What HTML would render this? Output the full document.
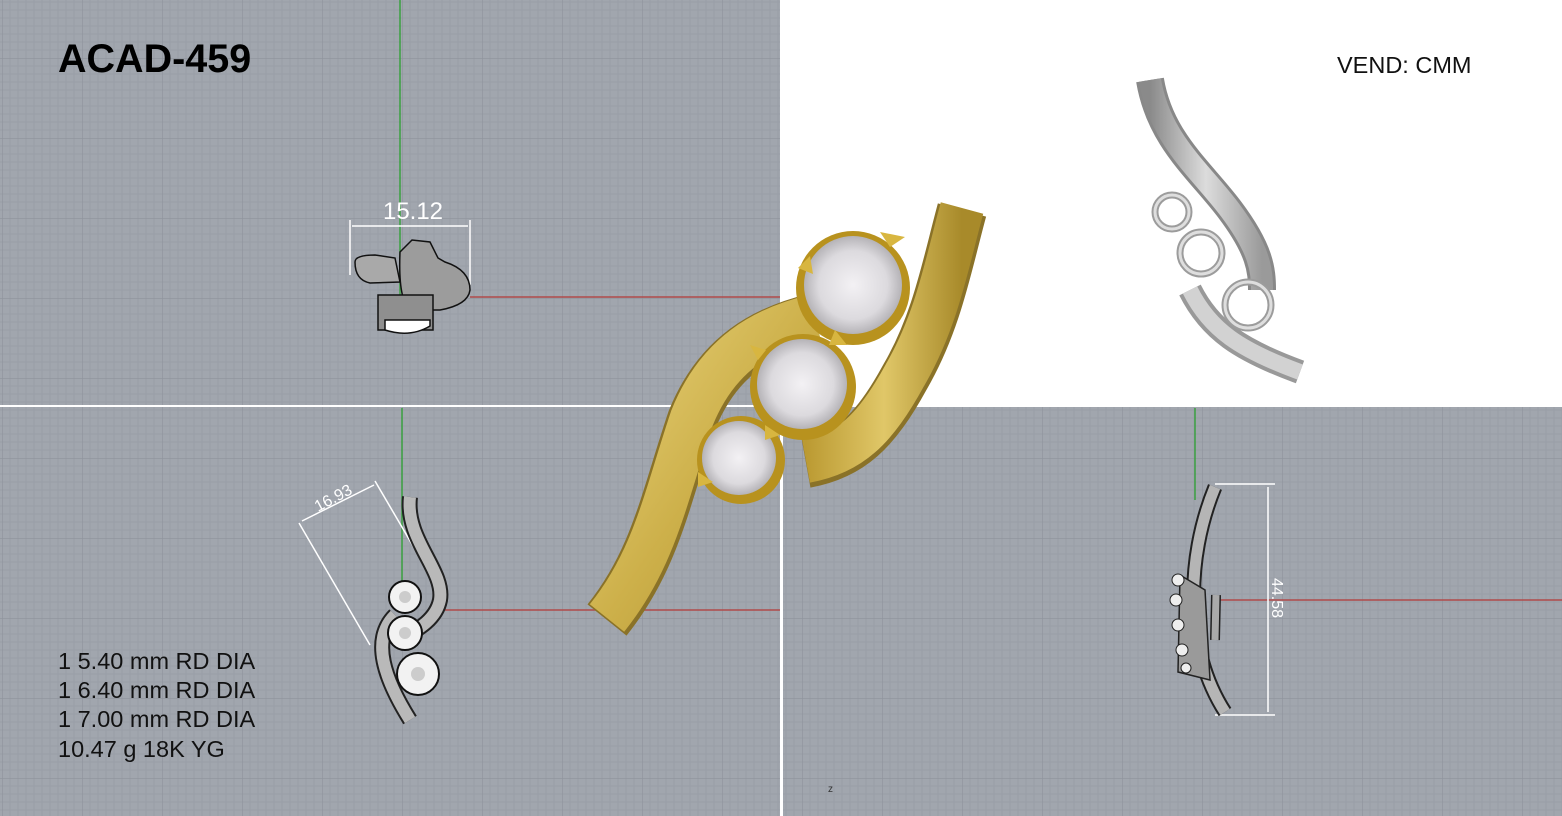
<!DOCTYPE html>
<html><head><meta charset="utf-8"><style>
html,body{margin:0;padding:0;background:#fff;width:1562px;height:816px;overflow:hidden}
svg{display:block}
text{font-family:"Liberation Sans",Arial,sans-serif}
</style></head><body>
<svg width="1562" height="816" viewBox="0 0 1562 816" xmlns="http://www.w3.org/2000/svg">
<defs>
<pattern id="g" width="80" height="80" patternUnits="userSpaceOnUse" x="2" y="-22">
<rect width="80" height="80" fill="#a1a6ae"/>
<path d="M8 0V80M16 0V80M24 0V80M32 0V80M40 0V80M48 0V80M56 0V80M64 0V80M72 0V80M0 8H80M0 16H80M0 24H80M0 32H80M0 40H80M0 48H80M0 56H80M0 64H80M0 72H80" stroke="#999ea7" stroke-width="1"/>
<path d="M0 0V80M0 0H80" stroke="#8e939c" stroke-width="1.2"/>
</pattern>
<linearGradient id="gold" x1="0" y1="0" x2="1" y2="1">
<stop offset="0" stop-color="#e8d27a"/><stop offset=".5" stop-color="#cdb04a"/><stop offset="1" stop-color="#b0922e"/></linearGradient>
<linearGradient id="gold2" x1="0" y1="0" x2="1" y2="0">
<stop offset="0" stop-color="#bb9a32"/><stop offset=".5" stop-color="#e0c768"/><stop offset="1" stop-color="#a88a2a"/></linearGradient>
<radialGradient id="dia" cx=".5" cy=".5" r=".5">
<stop offset="0" stop-color="#f3f1f4"/><stop offset=".7" stop-color="#dcdade"/><stop offset="1" stop-color="#b5b3b7"/></radialGradient>
<linearGradient id="sil" x1="0" y1="0" x2="1" y2="0">
<stop offset="0" stop-color="#8a8a8a"/><stop offset=".5" stop-color="#dcdcdc"/><stop offset="1" stop-color="#9a9a9a"/></linearGradient>
</defs>
<rect x="0" y="0" width="780" height="405" fill="url(#g)"/>
<rect x="0" y="407" width="780" height="409" fill="url(#g)"/>
<rect x="783" y="407" width="779" height="409" fill="url(#g)"/>
<rect x="780" y="0" width="782" height="407" fill="#fff"/>
<line x1="400" y1="0" x2="400" y2="296" stroke="#3aa040" stroke-width="1.5"/>
<line x1="470" y1="297" x2="780" y2="297" stroke="#b04a4a" stroke-width="1.5"/>
<line x1="402" y1="408" x2="402" y2="590" stroke="#3aa040" stroke-width="1.5"/>
<line x1="430" y1="610" x2="780" y2="610" stroke="#b04a4a" stroke-width="1.5"/>
<line x1="1195" y1="408" x2="1195" y2="500" stroke="#3aa040" stroke-width="1.5"/>
<line x1="1215" y1="600" x2="1562" y2="600" stroke="#b04a4a" stroke-width="1.5"/>
<text x="58" y="72" font-size="39.5" font-weight="bold" fill="#000">ACAD-459</text>
<text x="1337" y="73" font-size="23.5" fill="#111">VEND: CMM</text>
<g font-size="23.5" fill="#111">
<text x="58" y="669">1 5.40 mm RD DIA</text>
<text x="58" y="698">1 6.40 mm RD DIA</text>
<text x="58" y="727">1 7.00 mm RD DIA</text>
<text x="58" y="757">10.47 g 18K YG</text>
</g>
<text x="828" y="792" font-size="10" fill="#333">z</text>
<g stroke="#fff" stroke-width="1.5" fill="none">
<line x1="350" y1="220" x2="350" y2="275"/><line x1="470" y1="220" x2="470" y2="285"/>
<line x1="352" y1="226" x2="468" y2="226"/>
</g>
<text x="413" y="219" font-size="24" fill="#fff" text-anchor="middle">15.12</text>
<g stroke="#111" stroke-width="1.5">
<path d="M355 262 Q355 255 375 255 L395 258 L400 282 L370 283 Q355 280 355 262Z" fill="#a9a9a9"/>
<path d="M400 252 L412 240 L430 242 L438 258 L445 262 Q470 270 470 290 Q468 305 440 310 L410 310 Q398 300 400 252Z" fill="#9c9c9c"/>
<rect x="378" y="295" width="55" height="35" fill="#8f8f8f"/>
<path d="M385 330 Q410 338 430 326 L430 320 L385 320Z" fill="#fff"/>
</g>
<!-- gold ring -->
<path d="M607 620 C655 560 665 500 692 420 C718 355 765 330 815 318" fill="none" stroke="#8a7228" stroke-width="50"/>
<path d="M607 618 C655 558 665 498 692 418 C718 353 765 328 815 316" fill="none" stroke="url(#gold)" stroke-width="44"/>
<path d="M962 210 C947 265 937 322 905 377 C875 432 850 455 806 463" fill="none" stroke="#8a7228" stroke-width="50"/>
<path d="M962 208 C947 263 937 320 905 375 C875 430 850 453 806 461" fill="none" stroke="url(#gold2)" stroke-width="44"/>
<g>
<circle cx="853" cy="288" r="57" fill="#b8921e"/><circle cx="853" cy="285" r="49" fill="url(#dia)"/>
<circle cx="803" cy="387" r="53" fill="#b8921e"/><circle cx="802" cy="384" r="45" fill="url(#dia)"/>
<circle cx="741" cy="460" r="44" fill="#b8921e"/><circle cx="739" cy="458" r="37" fill="url(#dia)"/>
<g fill="#d8b640"><path d="M798 268l12-12 3 18z"/><path d="M880 232l25 5-15 10z"/><path d="M835 330l12 15-18 0z"/><path d="M758 360l-8-15 16 5z"/><path d="M698 472l15 10-15 5z"/><path d="M765 425l15 10-15 5z"/></g>
</g>
<!-- top-right silver -->
<path d="M1150 80 C1160 140 1200 170 1230 210 C1260 250 1262 270 1262 290" fill="none" stroke="#888" stroke-width="28"/>
<path d="M1150 80 C1160 140 1200 170 1230 210 C1260 250 1262 270 1262 290" fill="none" stroke="url(#sil)" stroke-width="22"/>
<path d="M1190 290 C1210 330 1240 350 1300 372" fill="none" stroke="#999" stroke-width="24"/>
<path d="M1190 290 C1210 330 1240 350 1300 372" fill="none" stroke="#d2d2d2" stroke-width="16"/>
<g fill="none" stroke="#9c9c9c" stroke-width="7">
<circle cx="1172" cy="212" r="17"/><circle cx="1201" cy="253" r="21"/><circle cx="1248" cy="305" r="23"/></g>
<g fill="none" stroke="#dedede" stroke-width="3">
<circle cx="1172" cy="212" r="17"/><circle cx="1201" cy="253" r="21"/><circle cx="1248" cy="305" r="23"/></g>
<!-- bottom-left -->
<g stroke="#fff" stroke-width="1.5" fill="none">
<line x1="299" y1="523" x2="370" y2="645"/><line x1="375" y1="481" x2="430" y2="575"/>
<line x1="302" y1="521" x2="374" y2="485"/></g>
<text x="0" y="0" font-size="16" fill="#fff" transform="translate(318,512) rotate(-28)">16.93</text>
<path d="M410 497 C405 540 445 570 440 600 C435 625 405 635 400 640" fill="none" stroke="#222" stroke-width="16"/>
<path d="M410 497 C405 540 445 570 440 600 C435 625 405 635 400 640" fill="none" stroke="#b9b9b9" stroke-width="12"/>
<path d="M395 615 C370 640 385 680 410 720" fill="none" stroke="#222" stroke-width="16"/>
<path d="M395 615 C370 640 385 680 410 720" fill="none" stroke="#b9b9b9" stroke-width="12"/>
<g stroke="#111" stroke-width="2" fill="#f2f2f2">
<circle cx="405" cy="597" r="16"/><circle cx="405" cy="633" r="17"/><circle cx="418" cy="674" r="21"/></g>
<g fill="#ccc"><circle cx="405" cy="597" r="6"/><circle cx="405" cy="633" r="6"/><circle cx="418" cy="674" r="7"/></g>
<!-- bottom-right -->
<g stroke="#fff" stroke-width="1.5" fill="none">
<line x1="1215" y1="484" x2="1275" y2="484"/><line x1="1215" y1="715" x2="1275" y2="715"/>
<line x1="1268" y1="487" x2="1268" y2="712"/></g>
<text x="0" y="0" font-size="16" fill="#fff" transform="translate(1272,578) rotate(90)">44.58</text>
<path d="M1215 487 C1185 560 1185 650 1225 712" fill="none" stroke="#222" stroke-width="15"/>
<path d="M1215 487 C1185 560 1185 650 1225 712" fill="none" stroke="#b5b5b5" stroke-width="11"/>
<path d="M1216 595 L1215 640" stroke="#222" stroke-width="10"/>
<path d="M1216 595 L1215 640" stroke="#aaa" stroke-width="7"/>
<path d="M1180 575 L1178 672 L1210 680 L1205 590Z" fill="#9a9a9a" stroke="#222" stroke-width="1.5"/>
<g fill="#eee" stroke="#222" stroke-width="1"><circle cx="1178" cy="580" r="6"/><circle cx="1176" cy="600" r="6"/><circle cx="1178" cy="625" r="6"/><circle cx="1182" cy="650" r="6"/><circle cx="1186" cy="668" r="5"/></g>
</svg>
</body></html>
